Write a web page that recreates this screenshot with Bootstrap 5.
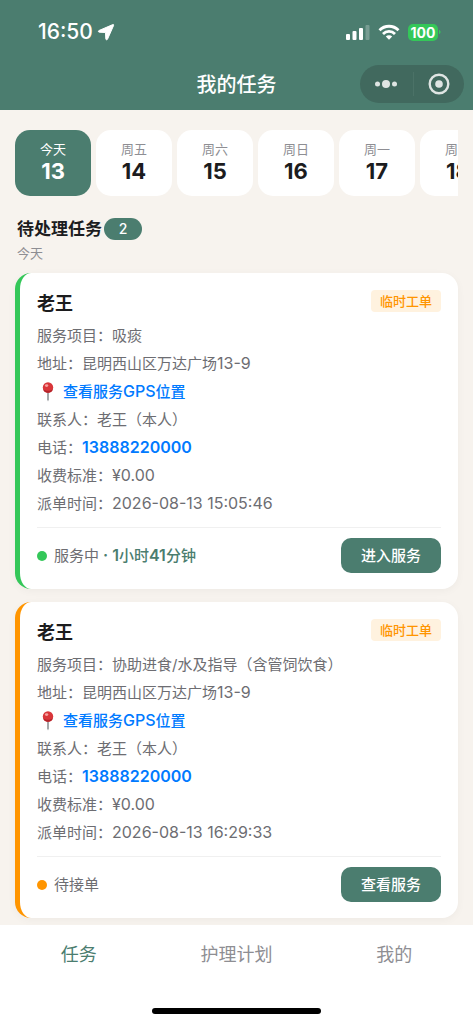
<!DOCTYPE html>
<html lang="zh-CN">
<head>
<meta charset="utf-8">
<meta name="viewport" content="width=device-width, initial-scale=1">
<title>我的任务</title>
<link href="https://cdn.jsdelivr.net/npm/bootstrap@5.3.0/dist/css/bootstrap.min.css" rel="stylesheet">
<style>
  :root { --brand: #4b7d6f; --ok: #34c759; --wait: #ff9500; }
  body { background: #f7f3ee; color: #1c1c1e; font-family: Inter, "Noto Sans CJK SC", sans-serif; font-size: 15px; line-height: 28px; }
  .app-head { background: var(--brand); }
  .status-row { height: 58px; padding: 6px 32px 0 38px; }
  .clock { font-size: 21px; font-weight: 500; }
  .battery { background: var(--ok); width: 30px; height: 17px; border-radius: 5px; font-size: 14px; font-weight: 700; line-height: 17px; }
  .title-row { display: grid; grid-template-columns: 1fr auto 1fr; height: 52px; padding: 0 9px; }
  .title-row h1 { font-size: 20px; line-height: 28px; font-weight: 500; padding-top: 2px; }
  .capsule { background: #41695e; width: 104px; height: 38px; }
  .capsule button { color: #dfe5e3; }
  .capsule button + button { border-left: 1px solid #4b7267 !important; height: 24px; }
  .page-main { padding: 20px 15px 6px; }
  .day-strip { gap: 5px; overflow-x: auto; scrollbar-width: none; }
  .day-strip::-webkit-scrollbar { display: none; }
  .day-btn { flex: 0 0 76px; height: 66px; border: 0; border-radius: 15px; background: #fff; color: #1c1c1e; padding: 0; }
  .day-btn span { display: block; font-size: 13px; line-height: 17px; color: #8e8e93; }
  .day-btn strong { display: block; font-size: 22px; line-height: 27px; font-weight: 700; }
  .day-btn.active { background: var(--brand); color: #fff; }
  .day-btn.active span { color: #fff; }
  .section-head { padding: 19px 2px 10px; }
  .section-head h2 { font-size: 17px; line-height: 28px; font-weight: 700; }
  .count-pill { background: var(--brand); color: #fff; font-size: 14px; font-weight: 500; line-height: 22px; width: 38px; margin-left: 2px; }
  .section-head p { font-size: 13px; line-height: 20px; color: #8e8e93; }
  .task-card { background: #fff; border-left: 5px solid var(--tone); border-radius: 16px; padding: 16px 17px; box-shadow: 0 2px 8px rgba(0,0,0,.04); }
  .task-card + .task-card { margin-top: 13px; }
  .task-card h3 { font-size: 18px; line-height: 28px; font-weight: 700; padding-top: 1px; }
  .tag { background: #fff2df; color: var(--wait); font-size: 13px; line-height: 22px; font-weight: 500; padding: 0 9px; border-radius: 4px; margin-top: 1px; }
  .task-info { color: #6d6d72; margin: 4px 0 9px; }
  .task-info a { color: #007aff; font-weight: 500; text-decoration: none; }
  .num { font-size: 16px; line-height: 20px; }
  .task-info a.num { font-weight: 600; }
  .task-foot { border-top: 1px solid #f0f0f0; padding-top: 10px; color: #6d6d72; }
  .dot { width: 10px; height: 10px; margin-right: 7px; background: var(--tone); }
  .elapsed { color: var(--brand); font-weight: 500; }
  .elapsed .num { font-weight: 600; }
  .go-btn { background: var(--brand); color: #fff; border: 0; border-radius: 10px; width: 100px; height: 35px; font-size: 15px; line-height: 35px; font-weight: 500; }
  .tone-ok { --tone: var(--ok); }
  .tone-wait { --tone: var(--wait); }
  .tab-bar { background: #fff; }
  .tab-bar a { color: #8e8e93; font-size: 18px; line-height: 28px; text-decoration: none; padding: 16px 0 39px; }
  .tab-bar a.active { color: var(--brand); }
  .home-line { width: 169px; height: 6px; background: #000; margin-bottom: 10px; }
</style>
</head>
<body class="d-flex flex-column min-vh-100">
<svg class="d-none" aria-hidden="true">
  <symbol id="pin" viewBox="0 0 14 20">
    <path d="M6.200 9h1.600v8.600L7 19.400l-.8-1.800z" fill="#8f9295"/>
    <circle cx="7" cy="5.500" r="5.200" fill="#d9363a"/>
    <path d="M2 7a5.200 5.200 0 0 0 10 0c-2 2.400-8 2.400-10 0z" fill="#b32329"/>
    <ellipse cx="5.600" cy="3.600" rx="1.700" ry="1.300" fill="#f5a3a0"/>
  </symbol>
</svg>

<header class="app-head text-white">
  <div class="status-row d-flex justify-content-between align-items-center">
    <div class="d-flex align-items-center gap-1">
      <span class="clock">16:50</span>
      <svg width="18" height="18" viewBox="0 0 18 18" aria-hidden="true"><path d="M15.800 1.600 2 7.500c-.9.4-.8 1.600.3 1.700l6.200.3.300 6.400c.1 1.100 1.300 1.200 1.700.3L16.600 2.400c.3-.7-.1-1.100-.8-.8z" fill="#fff" stroke="#fff" stroke-width="1" stroke-linejoin="round"/></svg>
    </div>
    <div class="d-flex align-items-center">
      <svg width="24" height="16" viewBox="0 0 24 16" aria-hidden="true" class="me-2"><g fill="#fff"><rect y="10" width="4" height="6" rx="1"/><rect x="6.500" y="7" width="4" height="9" rx="1"/><rect x="13" y="4" width="4" height="12" rx="1"/><rect x="19.500" y="1" width="4" height="15" rx="1" opacity=".25"/></g></svg>
      <svg width="22" height="16" viewBox="0 0 22 16" aria-hidden="true" class="me-2"><g fill="none" stroke="#fff" stroke-width="2.800"><path d="M1.500 6.200a13.400 13.400 0 0 1 19 0"/><path d="M5 9.900a8.500 8.500 0 0 1 12 0"/></g><path d="m11 15.700-3.200-3.200a4.600 4.600 0 0 1 6.400 0z" fill="#fff"/></svg>
      <span class="battery text-center">100</span>
      <svg width="3" height="6" viewBox="0 0 3 6" aria-hidden="true"><path d="M1 1c2 .5 2 3.500 0 4z" fill="#34c759"/></svg>
    </div>
  </div>
  <div class="title-row align-items-center">
    <span></span>
    <h1 class="m-0">我的任务</h1>
    <div class="capsule rounded-pill d-flex align-items-center ms-auto">
      <button type="button" class="btn p-0 border-0 rounded-0 flex-fill d-flex align-items-center justify-content-center" aria-label="更多">
        <svg width="24" height="10" viewBox="0 0 24 10" fill="currentColor"><circle cx="3.500" cy="5" r="2.500"/><circle cx="12" cy="5" r="4"/><circle cx="20.500" cy="5" r="2.500"/></svg>
      </button>
      <button type="button" class="btn p-0 border-0 rounded-0 flex-fill d-flex align-items-center justify-content-center" aria-label="关闭">
        <svg width="22" height="22" viewBox="0 0 22 22"><circle cx="11" cy="11" r="9.300" fill="none" stroke="currentColor" stroke-width="2.400"/><circle cx="11" cy="11" r="3.800" fill="currentColor"/></svg>
      </button>
    </div>
  </div>
</header>

<main class="page-main flex-grow-1">
  <div class="day-strip d-flex">
    <button type="button" class="day-btn active"><span>今天</span><strong>13</strong></button>
    <button type="button" class="day-btn"><span>周五</span><strong>14</strong></button>
    <button type="button" class="day-btn"><span>周六</span><strong>15</strong></button>
    <button type="button" class="day-btn"><span>周日</span><strong>16</strong></button>
    <button type="button" class="day-btn"><span>周一</span><strong>17</strong></button>
    <button type="button" class="day-btn"><span>周二</span><strong>18</strong></button>
  </div>

  <div class="section-head">
    <div class="d-flex align-items-center">
      <h2 class="m-0">待处理任务</h2>
      <span class="count-pill rounded-pill text-center">2</span>
    </div>
    <p class="m-0">今天</p>
  </div>

  <article class="task-card tone-ok">
    <div class="d-flex justify-content-between align-items-start">
      <h3 class="m-0">老王</h3>
      <span class="tag">临时工单</span>
    </div>
    <div class="task-info">
      <div>服务项目：吸痰</div>
      <div>地址：昆明西山区万达广场<span class="num">13-9</span></div>
      <a href="#" class="d-flex align-items-center"><svg width="22" height="20" class="me-1" aria-hidden="true"><use href="#pin"/></svg><span>查看服务<span class="num">GPS</span>位置</span></a>
      <div>联系人：老王（本人）</div>
      <div>电话：<a href="tel:13888220000" class="num">13888220000</a></div>
      <div>收费标准：<span class="num">¥0.00</span></div>
      <div>派单时间：<span class="num">2026-08-13 15:05:46</span></div>
    </div>
    <div class="task-foot d-flex justify-content-between align-items-center">
      <div class="d-flex align-items-center"><span class="dot rounded-circle"></span><span>服务中<span class="elapsed"><span class="num"> · 1</span>小时<span class="num">41</span>分钟</span></span></div>
      <button type="button" class="btn go-btn p-0">进入服务</button>
    </div>
  </article>

  <article class="task-card tone-wait">
    <div class="d-flex justify-content-between align-items-start">
      <h3 class="m-0">老王</h3>
      <span class="tag">临时工单</span>
    </div>
    <div class="task-info">
      <div>服务项目：协助进食/水及指导（含管饲饮食）</div>
      <div>地址：昆明西山区万达广场<span class="num">13-9</span></div>
      <a href="#" class="d-flex align-items-center"><svg width="22" height="20" class="me-1" aria-hidden="true"><use href="#pin"/></svg><span>查看服务<span class="num">GPS</span>位置</span></a>
      <div>联系人：老王（本人）</div>
      <div>电话：<a href="tel:13888220000" class="num">13888220000</a></div>
      <div>收费标准：<span class="num">¥0.00</span></div>
      <div>派单时间：<span class="num">2026-08-13 16:29:33</span></div>
    </div>
    <div class="task-foot d-flex justify-content-between align-items-center">
      <div class="d-flex align-items-center"><span class="dot rounded-circle"></span><span>待接单</span></div>
      <button type="button" class="btn go-btn p-0">查看服务</button>
    </div>
  </article>
</main>

<footer class="tab-bar sticky-bottom">
  <nav class="d-flex text-center">
    <a href="#" class="col-4 active" aria-current="page">任务</a>
    <a href="#" class="col-4">护理计划</a>
    <a href="#" class="col-4">我的</a>
  </nav>
  <div class="home-line rounded-pill mx-auto"></div>
</footer>
<script src="https://cdn.jsdelivr.net/npm/bootstrap@5.3.0/dist/js/bootstrap.bundle.min.js"></script>
</body>
</html>
